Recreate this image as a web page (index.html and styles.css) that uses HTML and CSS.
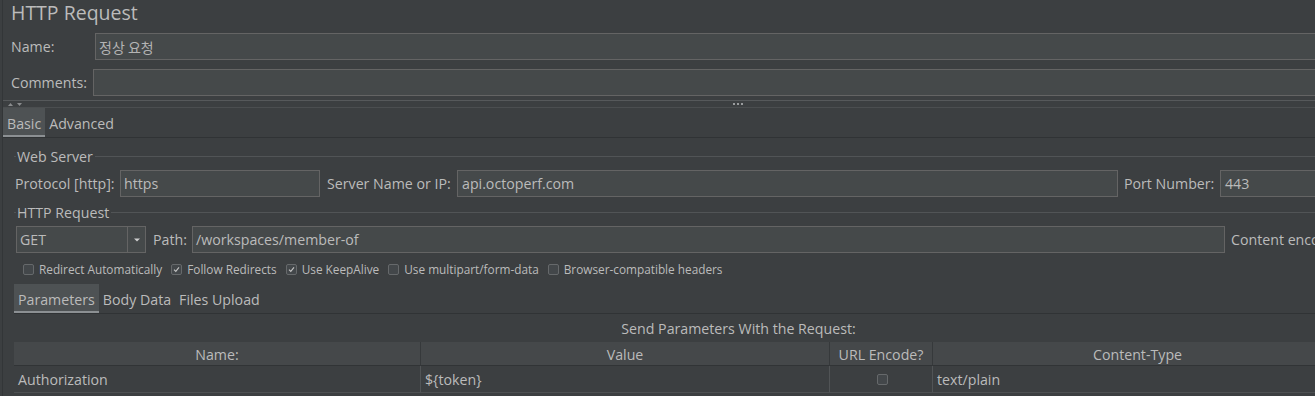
FILE: index.html
```html
<!DOCTYPE html>
<html>
<head>
<meta charset="utf-8">
<title>HTTP Request</title>
<link rel="stylesheet" href="styles.css">
</head>
<body>
<div class="panel">
  <div class="title">HTTP Request</div>
  <div class="row head-row">
    <span class="lbl lbl-name">Name:</span>
    <div class="input grow"><span class="ko">정상 요청</span></div>
  </div>
  <div class="row head-row comments-row">
    <span class="lbl lbl-comments">Comments:</span>
    <div class="input grow"></div>
  </div>
  <div class="divider">
    <svg class="arrows" width="16" height="5" viewBox="0 0 16 5"><path d="M1 4L3.5 1L6 4Z" fill="#8a8c8e"/><path d="M10 1L15 1L12.5 4Z" fill="#8a8c8e"/></svg>
    <span class="dots"><i></i><i></i><i></i></span>
  </div>
  <div class="tabs main-tabs">
    <div class="tab active">Basic</div>
    <div class="tab">Advanced</div>
  </div>
  <div class="basic">
    <div class="legend first"><span>Web Server</span></div>
    <div class="row">
      <span class="lbl lbl-proto">Protocol [http]:</span>
      <div class="input w-proto">https</div>
      <span class="lbl lbl-server">Server Name or IP:</span>
      <div class="input w-server">api.octoperf.com</div>
      <span class="lbl lbl-port">Port Number:</span>
      <div class="input w-port">443</div>
    </div>
    <div class="legend"><span>HTTP Request</span></div>
    <div class="row">
      <div class="combo">
        <span class="combo-val">GET</span>
        <span class="combo-btn"><svg width="6" height="4" viewBox="0 0 6 4"><path d="M0 0.5H6L3 3.5Z" fill="#d0d0d0"/></svg></span>
      </div>
      <span class="lbl lbl-path">Path:</span>
      <div class="input w-path">/workspaces/member-of</div>
      <span class="lbl lbl-enc">Content encoding:</span>
    </div>
    <div class="checks">
      <span class="check"><span class="cb"></span>Redirect Automatically</span>
      <span class="check"><span class="cb"><svg width="9" height="9" viewBox="0 0 9 9"><path d="M2 4.6L3.8 6.4L7 2.4" stroke="#c4c4c4" stroke-width="1.1" fill="none"/></svg></span>Follow Redirects</span>
      <span class="check"><span class="cb"><svg width="9" height="9" viewBox="0 0 9 9"><path d="M2 4.6L3.8 6.4L7 2.4" stroke="#c4c4c4" stroke-width="1.1" fill="none"/></svg></span>Use KeepAlive</span>
      <span class="check"><span class="cb"></span>Use multipart/form-data</span>
      <span class="check"><span class="cb"></span>Browser-compatible headers</span>
    </div>
    <div class="tabs sub-tabs">
      <div class="tab active">Parameters</div>
      <div class="tab">Body Data</div>
      <div class="tab">Files Upload</div>
    </div>
    <div class="send-label">Send Parameters With the Request:</div>
    <div class="grid">
      <div class="th">Name:</div>
      <div class="th">Value</div>
      <div class="th">URL Encode?</div>
      <div class="th">Content-Type</div>
      <div class="td">Authorization</div>
      <div class="td">${token}</div>
      <div class="td td-center"><span class="cb small"></span></div>
      <div class="td">text/plain</div>
    </div>
  </div>
</div>
</body>
</html>
```

FILE: styles.css
```css
html, body {
  margin: 0;
  padding: 0;
  overflow: hidden;
  background: #3c3f41;
}
body {
  width: 1315px;
  height: 396px;
  font-family: "Open Sans", "Noto Sans CJK KR", sans-serif;
  font-size: 14.2px;
  color: #bbbbbb;
}
.panel {
  margin-left: 2px;
  border-left: 1px solid #333638;
  width: 1700px;
  height: 396px;
}
.title {
  height: 33px;
  padding-left: 8px;
  font-size: 19.5px;
  line-height: 25px;
}
.row {
  display: flex;
  align-items: center;
  height: 27px;
}
.row > * {
  flex: none;
}
.head-row {
  padding-left: 8px;
}
.comments-row {
  margin-top: 9px;
}
.lbl {
  box-sizing: border-box;
  padding-top: 1px;
  line-height: 26px;
  white-space: nowrap;
}
.lbl-name { width: 84px; }
.lbl-comments { width: 82px; }
.input {
  box-sizing: border-box;
  height: 27px;
  background: #45494a;
  border: 1px solid #646464;
  padding-left: 3px;
  padding-top: 1px;
  line-height: 24px;
  white-space: nowrap;
  overflow: hidden;
}
.row > .grow {
  flex: 1 1 auto;
}
.ko {
  font-family: "Noto Sans CJK KR", sans-serif;
  font-size: 14px;
  color: #b4b4b4;
}
.divider {
  margin-top: 4px;
  height: 6px;
  border-top: 1px solid #56595b;
  border-bottom: 1px solid #4b4e50;
  display: flex;
  align-items: center;
}
.arrows {
  margin-left: 4px;
}
.dots {
  display: flex;
  gap: 2px;
  margin-left: 710px;
}
.dots i {
  display: block;
  width: 2px;
  height: 2px;
  background: #9a9c9e;
}
.tabs {
  display: flex;
  height: 29px;
  border-bottom: 1px solid #303335;
}
.tab {
  box-sizing: border-box;
  height: 29px;
  padding: 4px 4px 0;
  line-height: 23px;
  border-bottom: 2px solid transparent;
  white-space: nowrap;
}
.tab.active {
  background: #4e5254;
  border-bottom-color: #8c9093;
}
.basic {
  padding-left: 11px;
}
.legend {
  display: flex;
  height: 29px;
}
.legend.first {
  margin-top: 3px;
}
.legend::before {
  content: "";
  width: 2px;
  height: 1px;
  margin-top: 15px;
  background: #515456;
}
.legend span {
  margin-left: 1px;
  padding-right: 2px;
  margin-top: 6px;
  line-height: 20px;
}
.legend::after {
  content: "";
  flex: 1;
  height: 1px;
  margin-top: 15px;
  background: #515456;
}
.lbl-proto { width: 106px; padding-left: 1px; }
.w-proto { width: 200px; }
.lbl-server { width: 137px; padding-left: 7px; }
.w-server { width: 661px; padding-left: 4px; }
.lbl-port { width: 102px; padding-left: 6px; }
.w-port { width: 200px; padding-left: 4px; }
.combo {
  box-sizing: border-box;
  display: flex;
  margin-left: 2px;
  width: 130px;
  height: 27px;
  background: #45494a;
  border: 1px solid #646464;
}
.combo-val {
  flex: 1;
  padding-left: 3px;
  padding-top: 1px;
  line-height: 24px;
}
.combo-btn {
  width: 17px;
  border-left: 1px solid #646464;
  display: flex;
  align-items: center;
  justify-content: center;
}
.lbl-path { width: 46px; padding-left: 7px; }
.w-path { width: 1033px; }
.lbl-enc { padding-left: 6px; }
.checks {
  display: flex;
  align-items: center;
  height: 31px;
  padding-top: 1px;
  box-sizing: border-box;
  padding-left: 9px;
  gap: 9px;
  font-size: 11.8px;
}
.check {
  display: flex;
  align-items: center;
  gap: 5px;
  white-space: nowrap;
}
.cb {
  box-sizing: border-box;
  width: 11px;
  height: 11px;
  border: 1px solid #66696b;
  border-radius: 2px;
  background: #43474a;
  display: flex;
  align-items: center;
  justify-content: center;
}
.sub-tabs {
  width: 1700px;
}
.send-label {
  box-sizing: border-box;
  width: 1449px;
  height: 28px;
  padding-top: 1px;
  line-height: 27px;
  text-align: center;
}
.grid {
  display: grid;
  grid-template-columns: 407px 409px 103px 410px;
  width: 1329px;
}
.th {
  box-sizing: border-box;
  height: 24px;
  padding-top: 2px;
  line-height: 21px;
  text-align: center;
  background: #45484a;
  border-right: 1px solid #36393b;
  border-bottom: 1px solid #313436;
  white-space: nowrap;
}
.td {
  box-sizing: border-box;
  height: 27px;
  padding: 1px 0 0 4px;
  line-height: 25px;
  border-right: 1px solid #515456;
  border-bottom: 1px solid #4d5052;
  white-space: nowrap;
}
.td-center {
  display: flex;
  align-items: center;
  justify-content: center;
  padding: 0;
}
.cb.small {
  width: 11px;
  height: 11px;
  margin-left: 2px;
}
```
